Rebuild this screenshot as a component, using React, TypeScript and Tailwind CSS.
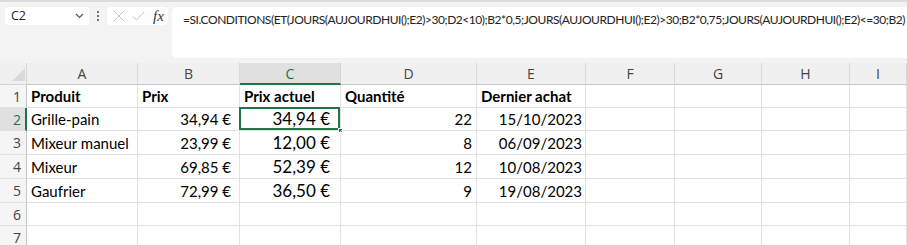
import React from "react";

const cols = [27, 111, 102, 101, 136, 109, 89, 87, 88, 57];
const letters = ["A", "B", "C", "D", "E", "F", "G", "H", "I"];
const rowHeights = [23, 23, 24, 24, 24, 23, 23];

type Cell = { t: string; align?: "l" | "r"; bold?: boolean; pr?: number; big?: boolean };

const data: Cell[][] = [
  [
    { t: "Produit", bold: true },
    { t: "Prix", bold: true },
    { t: "Prix actuel", bold: true },
    { t: "Quantité", bold: true },
    { t: "Dernier achat", bold: true },
  ],
  [
    { t: "Grille-pain" },
    { t: "34,94 €", align: "r", pr: 8 },
    { t: "34,94 €", align: "r", pr: 10, big: true },
    { t: "22", align: "r", pr: 4 },
    { t: "15/10/2023", align: "r", pr: 3 },
  ],
  [
    { t: "Mixeur manuel" },
    { t: "23,99 €", align: "r", pr: 8 },
    { t: "12,00 €", align: "r", pr: 10, big: true },
    { t: "8", align: "r", pr: 4 },
    { t: "06/09/2023", align: "r", pr: 3 },
  ],
  [
    { t: "Mixeur" },
    { t: "69,85 €", align: "r", pr: 8 },
    { t: "52,39 €", align: "r", pr: 10, big: true },
    { t: "12", align: "r", pr: 4 },
    { t: "10/08/2023", align: "r", pr: 3 },
  ],
  [
    { t: "Gaufrier" },
    { t: "72,99 €", align: "r", pr: 8 },
    { t: "36,50 €", align: "r", pr: 10, big: true },
    { t: "9", align: "r", pr: 4 },
    { t: "19/08/2023", align: "r", pr: 3 },
  ],
  [],
  [],
];

export default function App() {
  return (
    <div className="w-[907px] h-[245px] overflow-hidden bg-[#f3f3f3] font-['Open_Sans',sans-serif] relative">
      <div className="h-[2px] bg-[#dcdcdc]" />

      {/* barre de formule */}
      <div className="flex items-start h-[61px] pt-[5px] pl-[5px]">
        <div className="shrink-0 w-[84px] h-[18px] bg-white rounded-[4px] flex items-center justify-between pl-[6px] pr-[5px] text-[12.5px] text-[#222]">
          <span>C2</span>
          <svg width="9" height="6" viewBox="0 0 9 6">
            <path d="M1 1 L4.5 4.5 L8 1" fill="none" stroke="#555" strokeWidth="1.2" />
          </svg>
        </div>
        <div className="shrink-0 w-[18px] h-[18px] flex flex-col items-center justify-center gap-[2px]">
          <span className="w-[2px] h-[2px] bg-[#444] rounded-full" />
          <span className="w-[2px] h-[2px] bg-[#444] rounded-full" />
          <span className="w-[2px] h-[2px] bg-[#444] rounded-full" />
        </div>
        <div className="shrink-0 w-[61px] h-[18px] bg-white rounded-[4px] flex items-center pl-[6px] gap-[7px]">
          <svg width="12" height="12" viewBox="0 0 12 12">
            <path d="M1 1 L11 11 M11 1 L1 11" stroke="#c4c4c4" strokeWidth="1" />
          </svg>
          <svg width="13" height="12" viewBox="0 0 13 12">
            <path d="M1 6.5 L4.5 10 L12 2" fill="none" stroke="#c4c4c4" strokeWidth="1" />
          </svg>
          <span className="font-['Liberation_Serif',serif] italic text-[15px] leading-none text-[#333] ml-[1px]">fx</span>
        </div>
        <div className="ml-[4px] min-w-0 flex-1 h-[51px] bg-white rounded-l-[5px] pl-[11px] pt-[4px] text-[12px] tracking-[-0.45px] font-['Lato',sans-serif] text-[#222] whitespace-nowrap overflow-hidden">
          =SI.CONDITIONS(ET(JOURS(AUJOURDHUI();E2)&gt;30;D2&lt;10);B2*0,5;JOURS(AUJOURDHUI();E2)&gt;30;B2*0,75;JOURS(AUJOURDHUI();E2)&lt;=30;B2)
        </div>
      </div>

      {/* grille */}
      <div className="grid bg-white grid-cols-[27px_111px_102px_101px_136px_109px_89px_87px_88px_57px] grid-rows-[22px_23px_23px_24px_24px_24px_23px_23px]">
        {/* en-têtes de colonnes */}
        <div className="bg-[#f0f0f0] border-r border-b border-[#d4d4d4] relative">
          <svg className="absolute right-[1px] bottom-[3px]" width="13" height="13" viewBox="0 0 13 13">
            <path d="M13 0 L13 13 L0 13 Z" fill="#d9d9d9" />
          </svg>
        </div>
        {letters.map((l) =>
          l === "C" ? (
            <div
              key={l}
              className="bg-[#e0e0e0] border-r border-[#d4d4d4] border-b-2 border-b-[#217346] flex items-center justify-center text-[14px] text-[#217346]"
            >
              {l}
            </div>
          ) : (
            <div
              key={l}
              className="bg-[#f0f0f0] border-r border-b border-[#d9d9d9] border-b-[#c6c6c6] flex items-center justify-center text-[14px] text-[#444]"
            >
              {l}
            </div>
          )
        )}

        {/* lignes */}
        {rowHeights.map((_, r) => {
          const row = data[r] || [];
          const sel = r === 1;
          return (
            <React.Fragment key={r}>
              <div
                className={
                  sel
                    ? "bg-[#e0e0e0] border-r-2 border-r-[#217346] border-b border-b-[#e1e1e1] flex items-center justify-end pr-[4px] text-[14px] text-[#217346]"
                    : "bg-[#f5f5f5] border-r border-r-[#c6c6c6] border-b border-b-[#e1e1e1] flex items-center justify-end pr-[5px] text-[14px] text-[#444]"
                }
              >
                {r + 1}
              </div>
              {cols.slice(1).map((_, c) => {
                const cell = row[c];
                const isSel = sel && c === 2;
                return (
                  <div
                    key={c}
                    className={
                      "relative border-r border-b border-[#e1e1e1] flex items-end leading-none pb-[3px] overflow-visible whitespace-nowrap text-black font-['Lato',sans-serif] " +
                      (cell?.align === "r" ? "justify-end " : "justify-start pl-[4px] ") +
                      (cell?.big ? "text-[17px] " : "text-[15px] ") +
                      (cell?.bold ? "font-bold " : "")
                    }
                    style={cell?.pr ? { paddingRight: cell.pr } : undefined}
                  >
                    {cell?.t}
                    {isSel && (
                      <>
                        <div className="absolute -left-[1px] -top-[1px] right-0 bottom-0 border-2 border-[#217346] pointer-events-none" />
                        <div className="absolute -right-[3px] -bottom-[3px] w-[5px] h-[5px] bg-[#217346] border border-white" />
                      </>
                    )}
                  </div>
                );
              })}
            </React.Fragment>
          );
        })}
      </div>
    </div>
  );
}
